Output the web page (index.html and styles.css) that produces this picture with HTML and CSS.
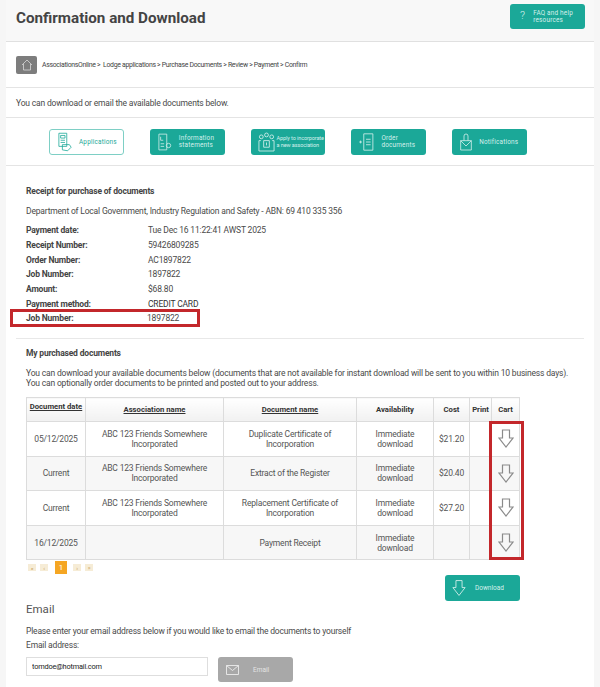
FILE: index.html
```html
<!DOCTYPE html>
<html lang="en">
<head>
    <meta charset="UTF-8">
    <title>Confirmation and Download</title>
    <link rel="stylesheet" href="styles.css">
</head>
<body>
    <div class="page">
        <header class="page-header">
            <h1>Confirmation and Download</h1>
            <a class="btn btn-help">
                <span class="help-mark">?</span>
                <span>FAQ and help<br>resources</span>
            </a>
        </header>

        <div class="crumbs">
            <span class="home-icon">
                <svg width="12" height="12" viewBox="0 0 12 12" fill="none" stroke="#d8d8d8" stroke-width="0.8"><path d="M1 6 6 1l5 5M2.500 5v6h7V5"/></svg>
            </span>
            <span class="crumb-text">AssociationsOnline &gt;&nbsp; Lodge applications &gt; Purchase Documents &gt; Review &gt; Payment &gt; Confirm</span>
        </div>

        <div class="intro">You can download or email the available documents below.</div>

        <nav class="steps">
            <a class="btn step step-active">
                <svg width="14" height="20" viewBox="0 0 16 22" fill="none" stroke="currentColor" stroke-width="0.9"><path d="M1 1h9v15H1zM3 3.500h5v3H3zM3 9h5M3 11.500h5"/><path d="M5 14h8l2 3-4 4-6-1z"/></svg>
                <span>Applications</span>
            </a>
            <a class="btn step">
                <svg width="14" height="20" viewBox="0 0 16 22" fill="none" stroke="currentColor" stroke-width="0.9"><path d="M1 2h9v18H1zM3 5v4h3M3 13h4M3 16h4"/><circle cx="12" cy="15" r="2.500"/></svg>
                <span>Information<br>statements</span>
            </a>
            <a class="btn step step-tight">
                <svg width="17" height="21" viewBox="0 0 18 22" fill="none" stroke="currentColor" stroke-width="0.9"><circle cx="3.500" cy="5" r="2"/><circle cx="9" cy="3" r="2"/><circle cx="14.500" cy="5" r="2"/><path d="M3 9H1v11h16V9h-2M6 9h6v7H6zM9 11v3"/></svg>
                <span>Apply to incorporate<br>a new association</span>
            </a>
            <a class="btn step">
                <svg width="15" height="20" viewBox="0 0 16 22" fill="none" stroke="currentColor" stroke-width="0.9"><path d="M5 2h10v18H5zM7.500 8h5M7.500 11h5M7.500 14h5M0 11h3M1.500 9.500v3"/></svg>
                <span>Order<br>documents</span>
            </a>
            <a class="btn step">
                <svg width="12" height="20" viewBox="0 0 18 28" fill="none" stroke="currentColor" stroke-width="1.200"><path d="M6 12V5a3 3 0 0 1 6 0v7M1 12h16v14H1zM1 12l8 8 8-8"/></svg>
                <span>Notifications</span>
            </a>
        </nav>

        <section class="receipt">
            <h2>Receipt for purchase of documents</h2>
            <p class="dept">Department of Local Government, Industry Regulation and Safety - ABN: 69 410 335 356</p>
            <dl class="details">
                <dt>Payment date:</dt><dd>Tue Dec 16 11:22:41 AWST 2025</dd>
                <dt>Receipt Number:</dt><dd>59426809285</dd>
                <dt>Order Number:</dt><dd>AC1897822</dd>
                <dt>Job Number:</dt><dd>1897822</dd>
                <dt>Amount:</dt><dd>$68.80</dd>
                <dt>Payment method:</dt><dd class="dark">CREDIT CARD</dd>
                <dt>Job Number:</dt><dd class="shift">1897822</dd>
            </dl>
            <div class="mark mark-job"></div>
        </section>

        <section class="documents">
            <h2>My purchased documents</h2>
            <p class="docs-note">You can download your available documents below (documents that are not available for instant download will be sent to you within 10 business days).<br>You can optionally order documents to be printed and posted out to your address.</p>

            <div class="table-wrap">
                <table class="docs">
                    <colgroup>
                        <col class="c-date"><col class="c-assoc"><col class="c-name"><col class="c-avail"><col class="c-cost"><col class="c-print"><col class="c-cart">
                    </colgroup>
                    <thead>
                        <tr>
                            <th class="top"><u>Document date</u></th>
                            <th><u>Association name</u></th>
                            <th><u>Document name</u></th>
                            <th>Availability</th>
                            <th>Cost</th>
                            <th>Print</th>
                            <th>Cart</th>
                        </tr>
                    </thead>
                    <tbody>
                        <tr>
                            <td>05/12/2025</td>
                            <td>ABC 123 Friends Somewhere<br>Incorporated</td>
                            <td>Duplicate Certificate of<br>Incorporation</td>
                            <td>Immediate<br>download</td>
                            <td>$21.20</td>
                            <td></td>
                            <td><svg class="cart-arrow" width="16" height="19" viewBox="0 0 16 19" fill="none" stroke="#8a8a8a" stroke-width="1.200"><path d="M4.500 1h7v8H15l-7 9-7-9h3.500z"/></svg></td>
                        </tr>
                        <tr>
                            <td>Current</td>
                            <td>ABC 123 Friends Somewhere<br>Incorporated</td>
                            <td>Extract of the Register</td>
                            <td>Immediate<br>download</td>
                            <td>$20.40</td>
                            <td></td>
                            <td><svg class="cart-arrow" width="16" height="19" viewBox="0 0 16 19" fill="none" stroke="#8a8a8a" stroke-width="1.200"><path d="M4.500 1h7v8H15l-7 9-7-9h3.500z"/></svg></td>
                        </tr>
                        <tr>
                            <td>Current</td>
                            <td>ABC 123 Friends Somewhere<br>Incorporated</td>
                            <td>Replacement Certificate of<br>Incorporation</td>
                            <td>Immediate<br>download</td>
                            <td>$27.20</td>
                            <td></td>
                            <td><svg class="cart-arrow" width="16" height="19" viewBox="0 0 16 19" fill="none" stroke="#8a8a8a" stroke-width="1.200"><path d="M4.500 1h7v8H15l-7 9-7-9h3.500z"/></svg></td>
                        </tr>
                        <tr>
                            <td>16/12/2025</td>
                            <td></td>
                            <td>Payment Receipt</td>
                            <td>Immediate<br>download</td>
                            <td></td>
                            <td></td>
                            <td><svg class="cart-arrow" width="16" height="19" viewBox="0 0 16 19" fill="none" stroke="#8a8a8a" stroke-width="1.200"><path d="M4.500 1h7v8H15l-7 9-7-9h3.500z"/></svg></td>
                        </tr>
                    </tbody>
                </table>
                <div class="mark mark-cart"></div>
            </div>

            <div class="pager">
                <span class="pg">«</span>
                <span class="pg">‹</span>
                <span class="pg-current">1</span>
                <span class="pg">›</span>
                <span class="pg">»</span>
            </div>

            <div class="download-row">
                <a class="btn btn-download">
                    <svg width="14" height="18" viewBox="0 0 16 19" fill="none" stroke="#d5f0ec" stroke-width="1"><path d="M4.500 1h7v8H15l-7 9-7-9h3.500z"/></svg>
                    <span>Download</span>
                </a>
            </div>
        </section>

        <section class="email">
            <h3>Email</h3>
            <p>Please enter your email address below if you would like to email the documents to yourself</p>
            <label for="email-input">Email address:</label>
            <div class="email-row">
                <input id="email-input" class="email-input" type="text" value="tomdoe@hotmail.com">
                <a class="btn btn-email">
                    <svg width="13" height="10" viewBox="0 0 13 10" fill="none" stroke="#ececec" stroke-width="0.9"><path d="M.5.500h12v9H.500zM.5.500l6 5 6-5"/></svg>
                    <span>Email</span>
                </a>
            </div>
        </section>
    </div>
</body>
</html>
```

FILE: styles.css
```css
* {
    box-sizing: border-box;
}
html, body {
    height: 100%;
}
body {
    margin: 0;
    background: #f6f6f6;
    font-family: Roboto, 'Liberation Sans', Arial, sans-serif;
    font-size: 8.5px;
    letter-spacing: -0.18px;
    color: #4a4a4a;
    overflow: hidden;
}
p, h1, h2, h3, dl, dd {
    margin: 0;
}
.page {
    margin: 0 6px;
    background: #fff;
    height: 687px;
    overflow: hidden;
}
.btn {
    display: flex;
    align-items: center;
    border-radius: 3px;
    background: #1ba898;
    color: #d5f0ec;
}

.page-header {
    height: 42px;
    margin: 0 -6px;
    padding: 4px 15px 0 16px;
    display: flex;
    align-items: flex-start;
    justify-content: space-between;
    background: #f8f8f8;
    border-bottom: 1px solid #e0e0e0;
}
.page-header h1 {
    font-size: 15.2px;
    font-weight: 700;
    letter-spacing: 0;
    line-height: 29px;
    color: #444;
}
.btn-help {
    width: 75px;
    height: 25px;
    padding-left: 10px;
    gap: 8px;
    font-size: 6.4px;
    line-height: 6.500px;
    letter-spacing: 0.2px;
}
.help-mark {
    font-size: 11px;
    font-weight: 300;
}

.crumbs {
    height: 46px;
    padding-left: 10px;
    display: flex;
    align-items: center;
    gap: 5px;
    border-bottom: 1px solid #e4e4e4;
}
.home-icon {
    width: 21px;
    height: 18px;
    display: flex;
    align-items: center;
    justify-content: center;
    background: #7d7d7d;
    border-radius: 2px;
}
.crumb-text {
    font-size: 6.9px;
    letter-spacing: -0.31px;
    color: #444;
}

.intro {
    height: 30px;
    padding-left: 10px;
    display: flex;
    align-items: center;
    border-bottom: 1px solid #e4e4e4;
}

.steps {
    height: 48px;
    padding: 11px 0 0 43px;
    display: flex;
    gap: 26px;
    border-bottom: 1px solid #e4e4e4;
}
.step {
    width: 74.8px;
    height: 26px;
    padding-left: 8px;
    gap: 7px;
    font-size: 6.4px;
    line-height: 7px;
    letter-spacing: 0.2px;
}
.step-active {
    background: #fff;
    color: #1ba898;
    border: 1px solid #7ecfc5;
}
.step-tight {
    padding-left: 7px;
    gap: 2px;
    font-size: 5.5px;
    letter-spacing: -0.1px;
}

.receipt {
    position: relative;
    padding: 0 10px;
    height: 172px;
}
h2 {
    font-size: 8.5px;
    font-weight: 700;
    color: #444;
}
.receipt h2 {
    padding: 20px 0 0 10px;
    line-height: 11px;
}
.dept {
    padding: 9px 0 0 10px;
    line-height: 11px;
}
.details {
    padding: 6px 0 0 10px;
    display: grid;
    grid-template-columns: 122px 1fr;
    grid-auto-rows: 14.7px;
    align-items: center;
}
.details dt {
    font-weight: 700;
    color: #444;
}
.dark {
    color: #333;
}
.shift {
    margin-left: -1px;
}
.mark {
    position: absolute;
    border: 3px solid #c3272b;
}
.mark-job {
    left: 4px;
    top: 143px;
    width: 190px;
    height: 18px;
}

.documents {
    margin: 0 10px;
    padding: 9px 0 0 10px;
    border-top: 1px solid #e8e8e8;
}
.documents h2 {
    line-height: 11px;
}
.docs-note {
    padding-top: 9px;
    line-height: 10px;
    white-space: nowrap;
}
.table-wrap {
    position: relative;
    margin-top: 9px;
}
.docs {
    width: 493px;
    table-layout: fixed;
    border-collapse: collapse;
    line-height: 10px;
    color: #555;
    text-align: center;
}
.c-date { width: 59px; }
.c-assoc { width: 138px; }
.c-name { width: 133px; }
.c-avail { width: 77px; }
.c-cost { width: 36px; }
.c-print { width: 22px; }
.c-cart { width: 28px; }
.docs th, .docs td {
    border: 1px solid #dcdcdc;
    padding: 0;
}
.docs th {
    height: 24px;
    font-size: 7.7px;
    font-weight: 700;
    letter-spacing: 0;
    color: #333;
    background: linear-gradient(#fff, #f1f1f1);
}
.docs th.top {
    vertical-align: top;
    padding-top: 4px;
}
.docs td {
    height: 34.6px;
}
.docs tbody tr:nth-child(even) td {
    background: #f7f7f7;
}
.cart-arrow {
    display: block;
    margin: 0 auto;
}
.mark-cart {
    left: 463px;
    top: 24px;
    width: 35px;
    height: 139px;
}

.pager {
    margin-top: 1px;
    padding-left: 2px;
    display: flex;
    align-items: center;
    gap: 4px;
}
.pg {
    width: 8px;
    height: 7px;
    display: flex;
    align-items: center;
    justify-content: center;
    background: #f6ecd6;
    color: #c9a15a;
    font-size: 6px;
}
.pg-current {
    width: 12px;
    height: 13px;
    margin: 0 2px 0 3px;
    display: flex;
    align-items: center;
    justify-content: center;
    background: #f5a623;
    color: #fff;
    font-size: 8px;
}
.download-row {
    width: 494px;
    margin-top: 1px;
    display: flex;
    justify-content: flex-end;
}
.btn-download {
    width: 75px;
    height: 26px;
    padding-left: 7px;
    gap: 9px;
    font-size: 6.5px;
    letter-spacing: 0;
}

.email {
    padding: 1px 0 0 20px;
}
.email h3 {
    font-size: 11.5px;
    font-weight: 400;
    letter-spacing: 0;
    line-height: 14px;
    color: #555;
}
.email p {
    padding-top: 10px;
    line-height: 10px;
}
.email label {
    display: block;
    padding-top: 4px;
    line-height: 10px;
}
.email-row {
    margin-top: 7px;
    display: flex;
    align-items: flex-start;
    gap: 10px;
}
.email-input {
    width: 182px;
    height: 19px;
    padding: 0 5px;
    border: 1px solid #dedede;
    font-family: inherit;
    font-size: 7.4px;
    letter-spacing: -0.2px;
    color: #222;
}
.btn-email {
    width: 75px;
    height: 25px;
    padding-left: 8px;
    gap: 14px;
    background: #a8a8a8;
    color: #e4e4e4;
    font-size: 6.5px;
    letter-spacing: 0;
}
```
